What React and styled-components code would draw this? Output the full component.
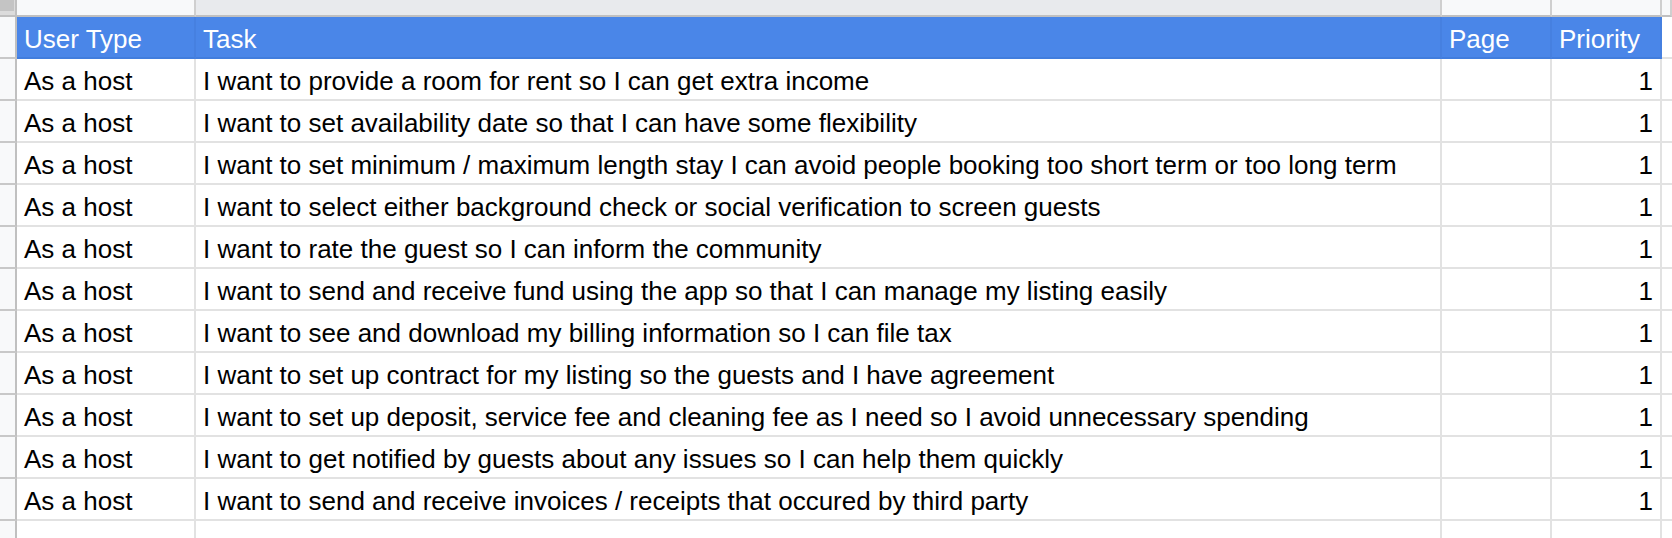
import React from "react";
import styled, { createGlobalStyle } from "styled-components";

const GlobalStyle = createGlobalStyle`
  html, body {
    margin: 0;
    padding: 0;
    overflow: hidden;
    background: #ffffff;
  }
  *, *::before, *::after { box-sizing: border-box; }
`;

const COLS = "17px 179px 1246px 110px 110px 1fr";

const Sheet = styled.div`
  display: flex;
  flex-direction: column;
  width: 1672px;
  font-family: "Liberation Sans", Arial, sans-serif;
`;

const Row = styled.div`
  display: grid;
  grid-template-columns: ${COLS};
  height: ${(p) => p.$h || 42}px;
`;

const Corner = styled.div`
  background: #dcdcdc;
  border-right: 2px solid #c0c0c0;
  border-bottom: 2px solid #c0c0c0;
  display: flex;
  align-items: flex-start;
`;

const CornerBlock = styled.div`
  width: 14px;
  height: 11px;
  background: #c4c4c4;
`;

const ColLetter = styled.div`
  background: ${(p) => (p.$active ? "#e8eaed" : "#f8f9fa")};
  border-right: 2px solid #cfcfcf;
  border-bottom: 2px solid #c0c0c0;
`;

const Gutter = styled.div`
  background: #f8f9fa;
  border-right: 2px solid #c0c0c0;
  border-bottom: 2px solid #c8c8c8;
`;

const Cell = styled.div`
  display: flex;
  align-items: center;
  justify-content: ${(p) => (p.$right ? "flex-end" : "flex-start")};
  padding: 3px 7px 0;
  font-size: 26px;
  line-height: 1;
  color: #000000;
  white-space: nowrap;
  overflow: hidden;
  border-right: 2px solid #e2e2e2;
  border-bottom: 2px solid #e2e2e2;
  background: #ffffff;
`;

const HeadCell = styled(Cell)`
  background: #4a86e8;
  color: #ffffff;
  border-right: 2px solid #4680e0;
  border-bottom: 2px solid #417ddd;
`;

const BlankHead = styled(Cell)``;

const tasks = [
  "I want to provide a room for rent so I can get extra income",
  "I want to set availability date so that I can have some flexibility",
  "I want to set minimum / maximum length stay I can avoid people booking too short term or too long term",
  "I want to select either background check or social verification to screen guests",
  "I want to rate the guest so I can inform the community",
  "I want to send and receive fund using the app so that I can manage my listing easily",
  "I want to see and download my billing information so I can file tax",
  "I want to set up contract for my listing so the guests and I have agreement",
  "I want to set up deposit, service fee and cleaning fee as I need so I avoid unnecessary spending",
  "I want to get notified by guests about any issues so I can help them quickly",
  "I want to send and receive invoices / receipts that occured by third party",
];

export default function App() {
  return (
    <>
      <GlobalStyle />
      <Sheet>
        <Row $h={17}>
          <Corner>
            <CornerBlock />
          </Corner>
          <ColLetter />
          <ColLetter $active />
          <ColLetter />
          <ColLetter />
          <ColLetter />
        </Row>
        <Row>
          <Gutter />
          <HeadCell>User Type</HeadCell>
          <HeadCell>Task</HeadCell>
          <HeadCell>Page</HeadCell>
          <HeadCell>Priority</HeadCell>
          <BlankHead />
        </Row>
        {tasks.map((t, i) => (
          <Row key={i}>
            <Gutter />
            <Cell>As a host</Cell>
            <Cell>{t}</Cell>
            <Cell />
            <Cell $right>1</Cell>
            <Cell />
          </Row>
        ))}
        <Row>
          <Gutter />
          <Cell />
          <Cell />
          <Cell />
          <Cell />
          <Cell />
        </Row>
      </Sheet>
    </>
  );
}
